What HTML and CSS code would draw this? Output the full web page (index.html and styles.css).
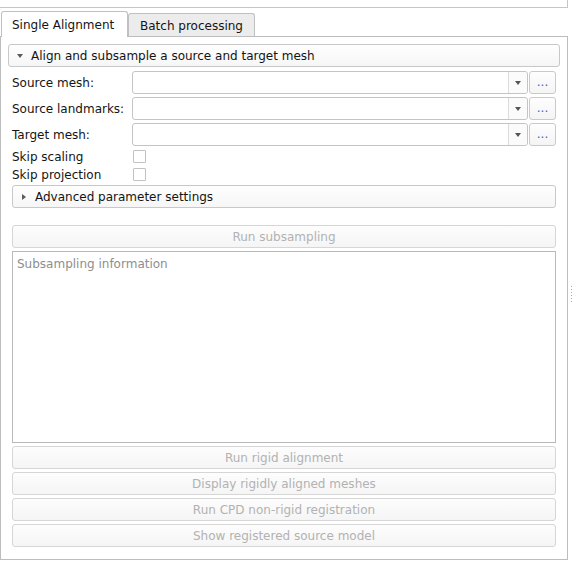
FILE: index.html
```
<!DOCTYPE html>
<html>
<head>
<meta charset="utf-8">
<link rel="stylesheet" href="styles.css">
</head>
<body>
<div class="window">
  <div class="main">
    <div class="topbox"></div>
    <div class="tabs">
      <div class="tab active">Single Alignment</div>
      <div class="tab">Batch processing</div>
    </div>
    <div class="pane">
      <div class="groupbtn"><span class="tri-down"></span><span>Align and subsample a source and target mesh</span></div>
      <div class="body">
        <div class="row">
          <div class="label">Source mesh:</div>
          <div class="combo"><div class="combo-field"></div><div class="combo-arrow"><span class="tri-small"></span></div></div>
          <div class="dots">...</div>
        </div>
        <div class="row">
          <div class="label">Source landmarks:</div>
          <div class="combo"><div class="combo-field"></div><div class="combo-arrow"><span class="tri-small"></span></div></div>
          <div class="dots">...</div>
        </div>
        <div class="row">
          <div class="label">Target mesh:</div>
          <div class="combo"><div class="combo-field"></div><div class="combo-arrow"><span class="tri-small"></span></div></div>
          <div class="dots">...</div>
        </div>
        <div class="cbrow">
          <div class="label">Skip scaling</div>
          <div class="checkbox"></div>
        </div>
        <div class="cbrow">
          <div class="label">Skip projection</div>
          <div class="checkbox"></div>
        </div>
        <div class="advbtn"><span class="tri-right"></span><span>Advanced parameter settings</span></div>
        <div class="btn disabled spaced">Run subsampling</div>
        <div class="textarea">Subsampling information</div>
        <div class="btn disabled">Run rigid alignment</div>
        <div class="btn disabled">Display rigidly aligned meshes</div>
        <div class="btn disabled">Run CPD non-rigid registration</div>
        <div class="btn disabled">Show registered source model</div>
      </div>
    </div>
  </div>
  <div class="splitter"><div class="handle"></div></div>
</div>
</body>
</html>
```
FILE: styles.css
```
* { box-sizing: border-box; }
html, body { margin: 0; padding: 0; background: #ffffff; }
body {
  font-family: "DejaVu Sans", "Liberation Sans", sans-serif;
  font-size: 12px;
  color: #141414;
  width: 572px;
  height: 576px;
  overflow: hidden;
}
.window { display: flex; flex-direction: row; }
.main { width: 568px; display: flex; flex-direction: column; }
.topbox {
  height: 8px;
  border-right: 1px solid #c6c6c6;
  border-bottom: 1px solid #c6c6c6;
}
.tabs {
  margin-top: 3px;
  height: 25px;
  display: flex;
  align-items: flex-end;
  padding-left: 1px;
  position: relative;
  z-index: 2;
}
.tab {
  height: 23px;
  width: 127px;
  border: 1px solid #c0c0c0;
  border-bottom: none;
  border-radius: 3px 3px 0 0;
  background: #ececec;
  display: flex;
  align-items: center;
  padding-left: 11px;
  padding-top: 2px;
  white-space: nowrap;
}
.tab.active {
  height: 26px;
  margin-bottom: -1px;
  background: #ffffff;
  padding-left: 10px;
  padding-top: 0;
}
.pane {
  border: 1px solid #bdbdbd;
  padding: 7px 7px 12px 7px;
  background: #ffffff;
  display: flex;
  flex-direction: column;
}
.groupbtn, .advbtn {
  height: 23px;
  border: 1px solid #c8c8c8;
  border-radius: 3px;
  background: linear-gradient(#fefefe, #f6f6f6);
  display: flex;
  align-items: center;
  white-space: nowrap;
}
.groupbtn { padding-left: 8px; }
.groupbtn .tri-down { margin-right: 8px; }
.tri-down {
  width: 0; height: 0;
  border-left: 3.5px solid transparent;
  border-right: 3.5px solid transparent;
  border-top: 4px solid #5a5a5a;
}
.tri-right {
  width: 0; height: 0;
  border-top: 3.5px solid transparent;
  border-bottom: 3.5px solid transparent;
  border-left: 4px solid #5a5a5a;
  margin-left: 9px;
  margin-right: 9px;
}
.body {
  margin-top: 4px;
  padding: 0 4px;
  display: flex;
  flex-direction: column;
  gap: 3px;
}
.row { height: 23px; display: flex; align-items: center; }
.label { width: 120px; white-space: nowrap; }
.combo {
  width: 396px;
  height: 23px;
  border: 1px solid #c4c4c4;
  border-radius: 3px;
  background: #ffffff;
  display: flex;
}
.combo-field { flex: 1; }
.combo-arrow {
  width: 19px;
  border-left: 1px solid #dcdcdc;
  background: #fbfbfb;
  border-radius: 0 3px 3px 0;
  display: flex;
  align-items: center;
  justify-content: center;
}
.tri-small {
  width: 0; height: 0;
  border-left: 3.5px solid transparent;
  border-right: 3.5px solid transparent;
  border-top: 4px solid #555555;
}
.dots {
  margin-left: 1px;
  width: 27px;
  height: 23px;
  border: 1px solid #cacaca;
  border-radius: 3px;
  background: linear-gradient(#fefefe, #f4f4f4);
  color: #2b6bd0;
  display: flex;
  align-items: center;
  justify-content: center;
  font-size: 12px;
  padding-bottom: 1px;
}
.cbrow { height: 15px; display: flex; align-items: center; }
.checkbox {
  width: 13px;
  height: 13px;
  margin-left: 1px;
  border: 1px solid #c2c2c2;
  border-radius: 1px;
  background: #ffffff;
}
.btn {
  height: 23px;
  border: 1px solid #d6d6d6;
  border-radius: 3px;
  background: linear-gradient(#fdfdfd, #f5f5f5);
  display: flex;
  align-items: center;
  justify-content: center;
  white-space: nowrap;
}
.btn.disabled { color: #b2b2b2; }
.btn.spaced { margin-top: 14px; }
.textarea {
  height: 192px;
  border: 1px solid #b9b9b9;
  background: #ffffff;
  color: #8e8e8e;
  padding: 5px 4px;
}
.splitter { flex: 1; }
.handle {
  margin-top: 286px;
  margin-left: 3px;
  width: 1px;
  height: 16px;
  background: repeating-linear-gradient(#a8a8a8 0 1px, transparent 1px 3px);
}
```
